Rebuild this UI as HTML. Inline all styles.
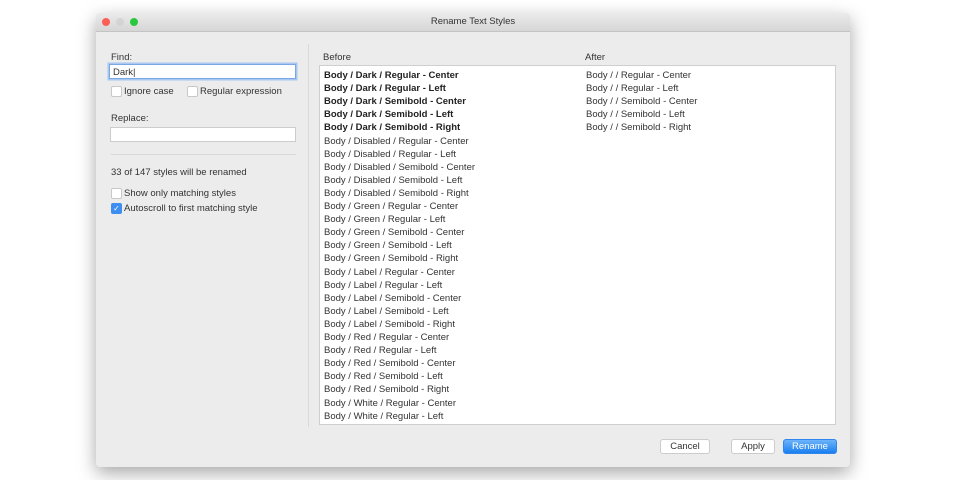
<!DOCTYPE html><html><head><style>
body{margin:0;width:960px;height:480px;background:#fff;font-family:"Liberation Sans",sans-serif;font-size:9.5px;color:#333;position:relative;overflow:hidden}
.a{position:absolute}
.win{left:96px;top:13px;width:754px;height:454px;background:#ececec;box-shadow:0 6px 18px rgba(0,0,0,.35);border-radius:4px}
.tb{left:0;top:0;width:754px;height:18px;background:linear-gradient(#ebebeb,#d6d6d6);border-bottom:1px solid #c4c4c4;border-radius:4px 4px 0 0;text-align:center;line-height:18px;font-size:9.5px;color:#333}
.dot{width:8px;height:8px;border-radius:50%;top:5px}
.cb{width:9px;height:9px;background:#fff;border:1px solid #c8c8c8;border-radius:2px}
.row{position:absolute;left:4px;height:13.1px;line-height:13px;white-space:nowrap}
.btn{height:13px;background:#fff;border:1px solid #ccc;border-radius:3px;text-align:center;line-height:13px;font-size:9.5px}
</style></head><body>
<div class="a win">
<div class="a tb">Rename Text Styles</div>
<div class="a dot" style="left:6px;background:#fc5f57"></div>
<div class="a dot" style="left:20px;background:#d4d4d4"></div>
<div class="a dot" style="left:34px;background:#2ac840"></div>
</div>
<div class="a" style="left:111px;top:52px">Find:</div>
<div class="a" style="left:109px;top:64px;width:185px;height:15px;background:#fff;border:1px solid #7aa7e6;box-shadow:0 0 0 1.5px #a9c7f0;line-height:15px;padding-left:3px;box-sizing:border-box;width:187px">Dark|</div>
<div class="a cb" style="left:111px;top:86px"></div><div class="a" style="left:124px;top:86px">Ignore case</div>
<div class="a cb" style="left:187px;top:86px"></div><div class="a" style="left:200px;top:86px">Regular expression</div>
<div class="a" style="left:111px;top:113px">Replace:</div>
<div class="a" style="left:110px;top:127px;width:186px;height:15px;background:#fff;border:1px solid #ccc;box-sizing:border-box"></div>
<div class="a" style="left:111px;top:154px;width:185px;height:1px;background:#d8d8d8"></div>
<div class="a" style="left:111px;top:167px">33 of 147 styles will be renamed</div>
<div class="a cb" style="left:111px;top:188px"></div><div class="a" style="left:124px;top:188px">Show only matching styles</div>
<div class="a cb" style="left:111px;top:203px;background:#3d8ef0;border-color:#3d8ef0;color:#fff;font-size:8px;line-height:9px;text-align:center">✓</div><div class="a" style="left:124px;top:203px">Autoscroll to first matching style</div>
<div class="a" style="left:308px;top:44px;width:1px;height:383px;background:#dadada"></div>
<div class="a" style="left:323px;top:52px">Before</div>
<div class="a" style="left:585px;top:52px">After</div>
<div class="a" style="left:319px;top:65px;width:517px;height:360px;background:#fff;border:1px solid #cfcfcf;box-sizing:border-box;overflow:hidden">
<div id="L"></div>
</div>
<div class="a btn" style="left:660px;top:439px;width:48px">Cancel</div>
<div class="a btn" style="left:731px;top:439px;width:42px">Apply</div>
<div class="a btn" style="left:783px;top:439px;width:52px;background:linear-gradient(#6cb3fa,#1a7ff0);border-color:#2f86ee;color:#fff">Rename</div>
<script>
var b=["Dark / Regular - Center","Dark / Regular - Left","Dark / Semibold - Center","Dark / Semibold - Left","Dark / Semibold - Right","Disabled / Regular - Center","Disabled / Regular - Left","Disabled / Semibold - Center","Disabled / Semibold - Left","Disabled / Semibold - Right","Green / Regular - Center","Green / Regular - Left","Green / Semibold - Center","Green / Semibold - Left","Green / Semibold - Right","Label / Regular - Center","Label / Regular - Left","Label / Semibold - Center","Label / Semibold - Left","Label / Semibold - Right","Red / Regular - Center","Red / Regular - Left","Red / Semibold - Center","Red / Semibold - Left","Red / Semibold - Right","White / Regular - Center","White / Regular - Left"];
var h="";b.forEach(function(s,i){var t=(3+i*13.1);h+='<div class="row" style="top:'+t+'px;'+(i<5?'font-weight:bold;color:#222':'')+'">Body / '+s+'</div>';if(i<5)h+='<div class="row" style="left:266px;top:'+t+'px">Body /  / '+s.split(" / ")[1]+'</div>';});
document.getElementById("L").innerHTML=h;
</script>
</body></html>
